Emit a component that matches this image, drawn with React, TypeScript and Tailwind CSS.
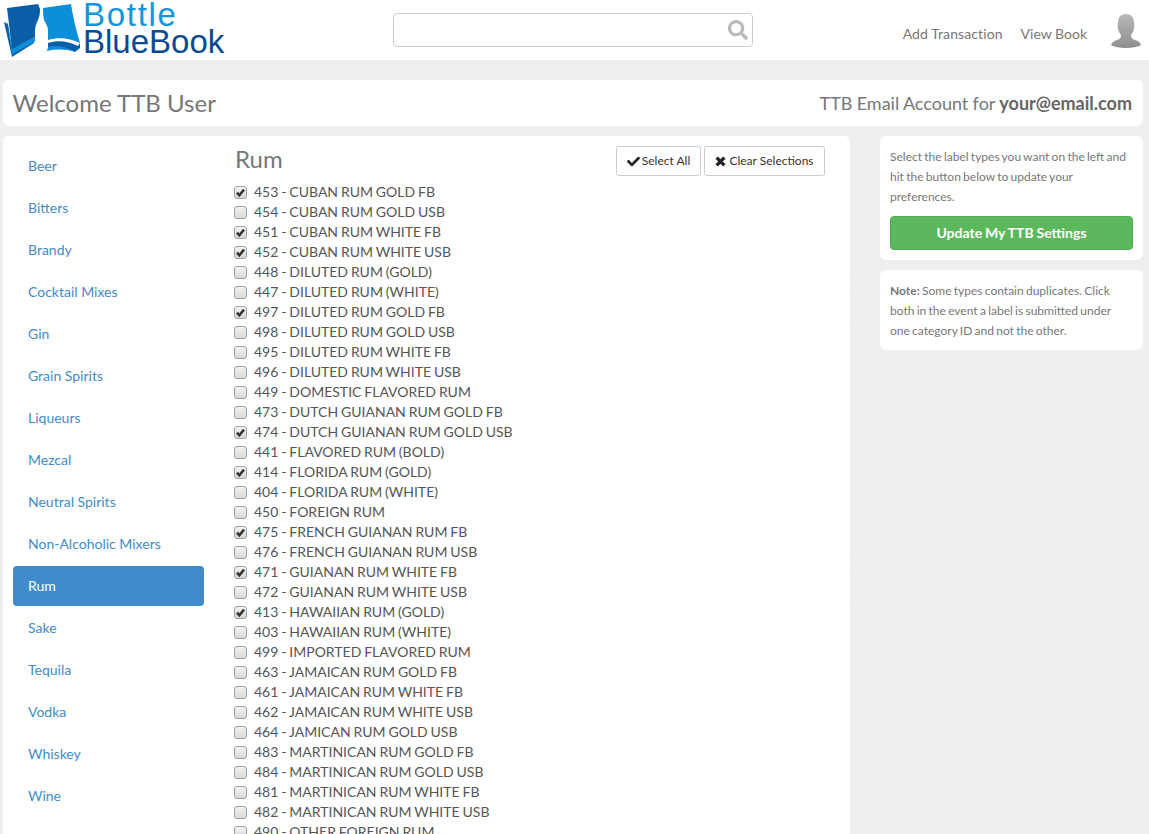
import { FaCheck, FaSearch } from "react-icons/fa";

const categories = [
  "Beer", "Bitters", "Brandy", "Cocktail Mixes", "Gin", "Grain Spirits", "Liqueurs", "Mezcal",
  "Neutral Spirits", "Non-Alcoholic Mixers", "Rum", "Sake", "Tequila", "Vodka", "Whiskey", "Wine",
];

const rumTypes = [
  "453 - CUBAN RUM GOLD FB", "454 - CUBAN RUM GOLD USB", "451 - CUBAN RUM WHITE FB", "452 - CUBAN RUM WHITE USB",
  "448 - DILUTED RUM (GOLD)", "447 - DILUTED RUM (WHITE)", "497 - DILUTED RUM GOLD FB", "498 - DILUTED RUM GOLD USB",
  "495 - DILUTED RUM WHITE FB", "496 - DILUTED RUM WHITE USB", "449 - DOMESTIC FLAVORED RUM",
  "473 - DUTCH GUIANAN RUM GOLD FB", "474 - DUTCH GUIANAN RUM GOLD USB", "441 - FLAVORED RUM (BOLD)",
  "414 - FLORIDA RUM (GOLD)", "404 - FLORIDA RUM (WHITE)", "450 - FOREIGN RUM", "475 - FRENCH GUIANAN RUM FB",
  "476 - FRENCH GUIANAN RUM USB", "471 - GUIANAN RUM WHITE FB", "472 - GUIANAN RUM WHITE USB",
  "413 - HAWAIIAN RUM (GOLD)", "403 - HAWAIIAN RUM (WHITE)", "499 - IMPORTED FLAVORED RUM",
  "463 - JAMAICAN RUM GOLD FB", "461 - JAMAICAN RUM WHITE FB", "462 - JAMAICAN RUM WHITE USB",
  "464 - JAMICAN RUM GOLD USB", "483 - MARTINICAN RUM GOLD FB", "484 - MARTINICAN RUM GOLD USB",
  "481 - MARTINICAN RUM WHITE FB", "482 - MARTINICAN RUM WHITE USB", "490 - OTHER FOREIGN RUM",
];

const checked = ["453", "451", "452", "497", "474", "414", "475", "471", "413"];

function Logo() {
  return (
    <div className="flex items-start">
      <svg viewBox="0 0 80 60" className="w-[80px] h-[60px] shrink-0">
        {/* left page stack */}
        <path d="M4 22 L12 57 L34 43 L34 41 L13 53 L8 24 Z" fill="#0a5ea8" />
        <path d="M6 16 L12 54 L35 41.5 L35 37 L12 48 Z" fill="#0b8fd8" />
        <path d="M7 8 L38 4 L40 9 C40 15 39 18 37 22 C35.5 26 35 28 35 31 L35 37 L12 49 Z" fill="#0a5ea8" />
        {/* right page stack */}
        <path d="M48 43 C58 40 68 41 78 46 L80 43 L80 48 L75 52 C66 47 56 46 48 48 Z" fill="#0a5ea8" />
        <path d="M48 47 C56 45 66 46 75 52 C65 49 56 49 47 51 Z" fill="#0b8fd8" />
        <path d="M43 8 L71 4 C73 17 76 30 80 43 C70 38 58 37 48 40 L48 31 C48 26 46 24 44 20 C43 16 43 12 43 8 Z" fill="#0b8fd8" />
      </svg>
      <div className="font-['Liberation_Sans',sans-serif] text-[33px] leading-[27px] pt-[1px] pl-[3px]">
        <div className="text-[#0f97dc] tracking-[1.7px]">Bottle</div>
        <div className="text-[#0b4a92]">BlueBook</div>
      </div>
    </div>
  );
}

function Avatar() {
  return (
    <svg viewBox="0 0 30 34" className="w-[30px] h-[34px]">
      <defs>
        <linearGradient id="avatarFill" x1="0" y1="0" x2="0" y2="1">
          <stop offset="0" stopColor="#b8b8b8" />
          <stop offset="1" stopColor="#8f8f8f" />
        </linearGradient>
      </defs>
      <path
        d="M15 0 C20 0 23 3 23 9 C23 11 24 12 23 15 C22 18 21 20 20 21 C20 24 21 25 24 26 C27 27 29 28 30 31 C27 33 21 34 15 34 C9 34 3 33 0 31 C1 28 3 27 6 26 C9 25 10 24 10 21 C9 20 8 18 7 15 C6 12 7 11 7 9 C7 3 10 0 15 0 Z"
        fill="url(#avatarFill)"
      />
    </svg>
  );
}

function RumRow({ label }: { label: string }) {
  const isChecked = checked.includes(label.slice(0, 3));
  return (
    <label className="flex items-center h-5 text-sm text-[#555] [word-spacing:-0.7px]">
      <span className="relative w-[13px] h-[13px] ml-[-1px] mr-[7px] shrink-0">
        <input
          type="checkbox"
          defaultChecked={isChecked}
          className="appearance-none block w-[13px] h-[13px] rounded-[3px] border border-[#a0a0a0] bg-[linear-gradient(#f2f2f2,#d8d8d8)]"
        />
        {isChecked && (
          <svg viewBox="0 0 13 13" className="absolute inset-0 w-[13px] h-[13px]">
            <path d="M3 6.6 L5.3 9.3 L10 3.6" fill="none" stroke="#333" strokeWidth="2.5" />
          </svg>
        )}
      </span>
      {label}
    </label>
  );
}

export default function App() {
  return (
    <div className="h-[834px] overflow-hidden font-['Lato',sans-serif] bg-[repeating-linear-gradient(45deg,#eeeeee_0px,#eeeeee_1px,#efefef_1px,#efefef_2px)]">
      <header className="h-[60px] bg-white flex items-start">
        <div className="w-[393px] shrink-0">
          <Logo />
        </div>
        <div className="w-[360px] h-[34px] mt-[13px] border border-[#cccccc] rounded-[4px] flex items-center justify-end pr-[4px] shrink-0">
          <FaSearch className="text-[20px] text-[#b9b9b9]" />
        </div>
        <nav className="ml-auto flex items-center gap-[18px] h-[34px] mt-[17px] text-sm text-[#777]">
          <a className="tracking-[0.1px]">Add Transaction</a>
          <a>View Book</a>
        </nav>
        <div className="ml-[24px] mr-[8px] mt-[14px]">
          <Avatar />
        </div>
      </header>

      <div className="pl-[3px] pr-[6px] pt-[20px]">
        <div className="h-[46px] bg-white rounded-[6px] flex items-center justify-between pl-[9.5px] pr-[11px] pb-[1px]">
          <h1 className="text-2xl text-[#777]">Welcome TTB User</h1>
          <p className="text-lg text-[#777] [word-spacing:-0.3px]">
            TTB Email Account for <strong className="font-bold text-[#666]">your@email.com</strong>
          </p>
        </div>

        <div className="flex items-start mt-[10px]">
          <main className="w-[847px] h-[720px] bg-white rounded-[6px] flex shrink-0 pt-[10px] pl-[10px]">
            <ul className="w-[191px] shrink-0">
              {categories.map((name) => (
                <li key={name} className="mb-[2px]">
                  <a
                    className={
                      name === "Rum"
                        ? "block h-10 px-[15px] leading-10 text-sm rounded-[4px] bg-[#428bca] text-white"
                        : "block h-10 px-[15px] leading-10 text-sm text-[#428bca]"
                    }
                  >
                    {name}
                  </a>
                </li>
              ))}
            </ul>
            <section className="ml-[31px] flex-1">
              <div className="flex items-start justify-between h-[36px] w-[590px]">
                <h2 className="text-2xl text-[#777] leading-[26px]">Rum</h2>
                <div className="flex gap-[3px]">
                  <button className="h-[30px] w-[85px] border border-[#cccccc] rounded-[3px] bg-white text-xs text-[#333] flex items-center justify-center gap-[2px]">
                    <FaCheck className="text-[13px] text-[#222]" />
                    Select All
                  </button>
                  <button className="h-[30px] w-[121px] border border-[#cccccc] rounded-[3px] bg-white text-xs text-[#333] flex items-center justify-center gap-[3px]">
                    <svg viewBox="0 0 10 10" className="w-[11px] h-[11px]">
                      <path d="M1.5 1.5 L8.5 8.5 M8.5 1.5 L1.5 8.5" stroke="#222" strokeWidth="3" />
                    </svg>
                    Clear Selections
                  </button>
                </div>
              </div>
              {rumTypes.map((label) => (
                <RumRow key={label} label={label} />
              ))}
            </section>
          </main>

          <aside className="w-[263px] ml-[30px] shrink-0 flex flex-col gap-[10px] text-xs leading-5 text-[#777] [word-spacing:-0.8px]">
            <div className="bg-white rounded-[6px] px-[10px] pt-[11px] pb-[10px]">
              <p>Select the label types you want on the left and hit the button below to update your preferences.</p>
              <button className="mt-[9px] w-full h-[34px] rounded-[4px] border border-[#4cae4c] bg-[#5cb85c] text-sm font-bold text-white [word-spacing:-0.5px]">
                Update My TTB Settings
              </button>
            </div>
            <div className="bg-white rounded-[6px] pl-[10px] pr-[20px] pt-[11px] pb-[9px]">
              <strong className="font-bold">Note:</strong> Some types contain duplicates. Click both in the event a label is submitted under one category ID and not the other.
            </div>
          </aside>
        </div>
      </div>
    </div>
  );
}
